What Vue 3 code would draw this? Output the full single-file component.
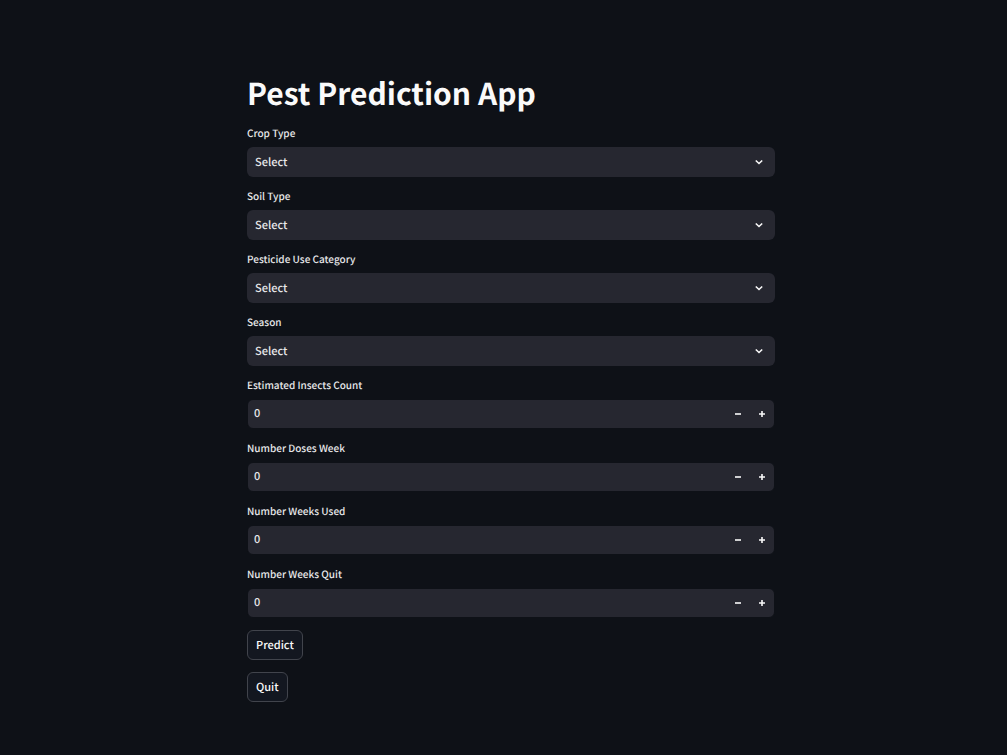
<script setup>
import { reactive } from 'vue'

const selects = reactive([
  { id: 'crop', label: 'Crop Type', value: 'Select' },
  { id: 'soil', label: 'Soil Type', value: 'Select' },
  { id: 'pesticide', label: 'Pesticide Use Category', value: 'Select' },
  { id: 'season', label: 'Season', value: 'Select' },
])

const numbers = reactive([
  { id: 'insects', label: 'Estimated Insects Count', value: 0 },
  { id: 'doses', label: 'Number Doses Week', value: 0 },
  { id: 'weeks-used', label: 'Number Weeks Used', value: 0 },
  { id: 'weeks-quit', label: 'Number Weeks Quit', value: 0 },
])

function step(field, amount) {
  field.value = Math.max(0, Number(field.value) + amount)
}
</script>

<template>
  <main class="page">
    <form class="form" @submit.prevent>
      <h1 class="title">Pest Prediction App</h1>

      <div v-for="field in selects" :key="field.id" class="field">
        <label class="label" :for="field.id">{{ field.label }}</label>
        <div class="box">
          <select :id="field.id" v-model="field.value" class="select">
            <option>Select</option>
          </select>
          <svg class="chevron" viewBox="0 0 8 8" aria-hidden="true">
            <path d="M0.8 2.5 L4 5.5 L7.2 2.5" />
          </svg>
        </div>
      </div>

      <div v-for="field in numbers" :key="field.id" class="field">
        <label class="label" :for="field.id">{{ field.label }}</label>
        <div class="box number">
          <input :id="field.id" v-model="field.value" class="input" type="number" min="0" />
          <button class="step" type="button" :aria-label="'Decrease ' + field.label" @click="step(field, -1)">
            <svg viewBox="0 0 8 8" aria-hidden="true"><path d="M1 4 H7" /></svg>
          </button>
          <button class="step" type="button" :aria-label="'Increase ' + field.label" @click="step(field, 1)">
            <svg viewBox="0 0 8 8" aria-hidden="true"><path d="M1 4 H7 M4 1 V7" /></svg>
          </button>
        </div>
      </div>

      <button class="action" type="submit">Predict</button>
      <button class="action" type="button">Quit</button>
    </form>
  </main>
</template>

<style>
body {
  background: #0e1117;
}
</style>

<style scoped>
.page {
  box-sizing: border-box;
  min-height: 100vh;
  padding: 72px 0 48px 15px;
  color: #fafafa;
  font-family: "Noto Sans CJK SC", "Noto Sans", sans-serif;
  font-weight: 500;
  text-rendering: geometricPrecision;
}

.form {
  display: flex;
  flex-direction: column;
  align-items: flex-start;
  gap: 12px;
  max-width: 528px;
  margin: 0 auto;
}

.title {
  height: 42px;
  margin: 0;
  font-size: 30px;
  line-height: 40px;
  font-weight: 700;
}

.field {
  width: 100%;
}

.label {
  display: block;
  height: 21px;
  color: #e8e8ea;
  font-size: 10px;
  line-height: 13px;
}

.box {
  box-sizing: border-box;
  position: relative;
  display: flex;
  height: 30px;
  border-radius: 6px;
  background: #262730;
}

.number {
  border: 1px solid #0e1117;
}

.select,
.input {
  flex: 1;
  min-width: 0;
  margin: 0;
  border: 0;
  outline: 0;
  background: transparent;
  color: #e8e8ea;
  font: inherit;
  font-size: 11px;
  text-rendering: inherit;
  appearance: none;
}

.select {
  padding: 0 28px 1px 8px;
  border-radius: 6px;
}

.input {
  padding: 0 6px 2px;
  appearance: textfield;
}

.input::-webkit-inner-spin-button {
  appearance: none;
  margin: 0;
}

.chevron {
  position: absolute;
  top: 11px;
  right: 12px;
  width: 8px;
  height: 8px;
  pointer-events: none;
}

svg {
  fill: none;
  stroke: #fafafa;
  stroke-width: 1.6;
}

.step {
  display: flex;
  align-items: center;
  justify-content: center;
  width: 24px;
  padding: 0;
  border: 0;
  background: transparent;
}

.step svg {
  width: 8px;
  height: 8px;
}

.action {
  height: 30px;
  padding: 0 8px 1px;
  border: 1px solid #41444c;
  border-radius: 6px;
  background: #131720;
  color: inherit;
  font: inherit;
  font-size: 11px;
  text-rendering: inherit;
}
</style>
